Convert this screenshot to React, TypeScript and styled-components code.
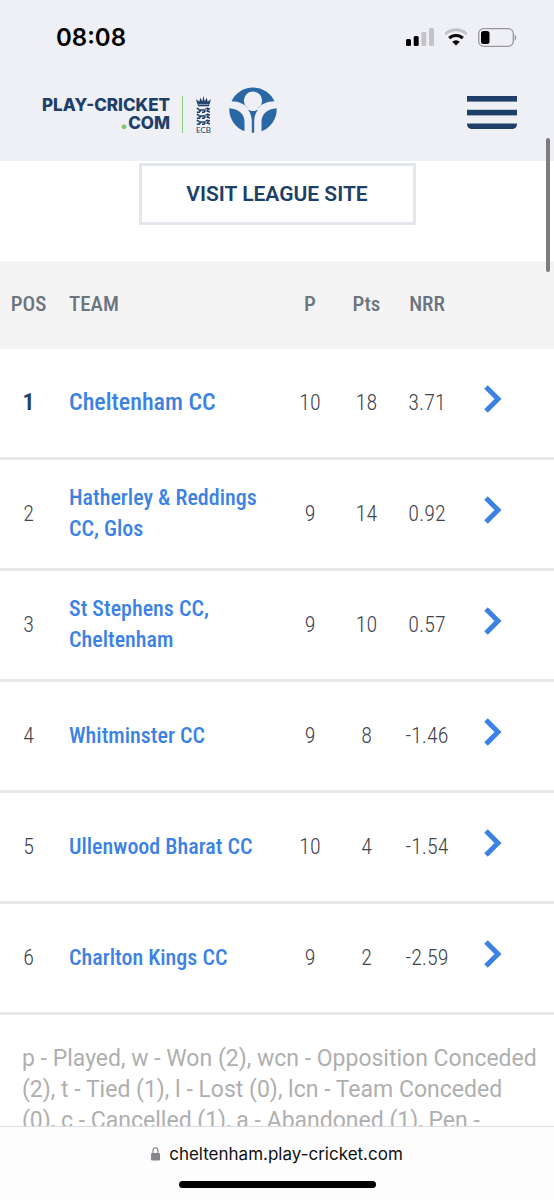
import React from "react";
import styled, { createGlobalStyle } from "styled-components";

const colors = {
  navy: "#1d3f68",
  link: "#3c82e4",
  bar: "#eff0f6",
  line: "#e8e8ea",
};

const condensed = `"Roboto Condensed", "Liberation Sans Narrow", Roboto, sans-serif`;

const GlobalStyle = createGlobalStyle`
  *, *::before, *::after { box-sizing: border-box; }
  body { margin: 0; background: #fff; font-family: Roboto, sans-serif; }
`;

const Screen = styled.div`
  position: relative;
  display: flex;
  flex-direction: column;
  height: 100vh;
  overflow: hidden;
`;

const TopBar = styled.header`
  flex: none;
  background: ${colors.bar};
  padding-bottom: 11px;
`;

const StatusBar = styled.div`
  display: flex;
  align-items: center;
  justify-content: space-between;
  height: 74px;
  padding: 0 37px 0 56px;
`;

const Clock = styled.time`
  padding-top: 2px;
  font: 600 24px/32px Inter, sans-serif;
  color: #000;
`;

const StatusIcons = styled.div`
  display: flex;
  align-items: center;
  gap: 10px;
`;

const Masthead = styled.div`
  display: flex;
  align-items: center;
  justify-content: space-between;
  height: 76px;
  padding: 0 37px 0 42px;
`;

const Brand = styled.a`
  display: flex;
  align-items: flex-end;
  padding-bottom: 6px;
  color: ${colors.navy};
  text-decoration: none;
`;

const Wordmark = styled.span`
  display: flex;
  flex-direction: column;
  align-items: flex-end;
  padding-bottom: 1px;
  font: 800 17px/18px Inter, sans-serif;
`;

const Dot = styled.span`
  color: #7cc468;
  font-size: 25px;
  line-height: 0;
`;

const Divider = styled.span`
  width: 1px;
  height: 37px;
  margin: 0 13px 0 12px;
  background: #8cc97a;
`;

const Crest = styled.svg`
  display: block;
  margin-right: 18px;
`;

const MenuButton = styled.button`
  display: block;
  padding: 0;
  border: 0;
  background: none;
  line-height: 0;
`;

const Content = styled.main`
  flex: 1;
  min-height: 0;
  overflow: hidden;
`;

const LinkRow = styled.div`
  display: flex;
  justify-content: center;
  padding: 2px 0 36px;
`;

const SiteLink = styled.a`
  width: 50%;
  padding: 15px 0;
  border: 3px solid #e4e6ee;
  color: ${colors.navy};
  font: 600 21px/26px Roboto, sans-serif;
  text-align: center;
  text-decoration: none;
`;

const Table = styled.table`
  width: 100%;
  table-layout: fixed;
  border-collapse: separate;
  border-spacing: 0;
  font-family: ${condensed};
  font-size: 22px;
  line-height: 31px;
`;

const Col = styled.col<{ $w?: number }>`
  width: ${(p) => (p.$w ? `${p.$w}px` : "auto")};
`;

const HeadCell = styled.th<{ $left?: boolean }>`
  height: 88px;
  padding: ${(p) => (p.$left ? "0 0 2px 12px" : "0 0 2px")};
  background: #f4f4f4;
  color: #6c757f;
  font-size: 21px;
  font-weight: 500;
  text-align: ${(p) => (p.$left ? "left" : "center")};
`;

const Cell = styled.td<{ $lead?: boolean }>`
  height: 111px;
  padding: 0 0 2px;
  border-bottom: 3px solid ${colors.line};
  color: ${(p) => (p.$lead ? colors.navy : "#3f444d")};
  font-size: ${(p) => (p.$lead ? 24 : 22)}px;
  font-weight: ${(p) => (p.$lead ? 600 : 300)};
  text-align: center;
`;

const TeamCell = styled(Cell)`
  padding: 0 20px 2px 12px;
  text-align: left;
`;

const ArrowCell = styled(Cell)`
  padding: 0 27px 12px 0;
`;

const TeamLink = styled.a<{ $lead?: boolean }>`
  color: ${colors.link};
  font-size: ${(p) => (p.$lead ? 24 : 22)}px;
  font-weight: 500;
  text-decoration: none;
`;

const RowLink = styled.a`
  display: inline-block;
  vertical-align: middle;
  line-height: 0;
`;

const Legend = styled.p`
  margin: 0;
  padding: 28px 14px 27px 22px;
  color: #afafaf;
  font: 400 23px/31px Roboto, sans-serif;
`;

const ScrollThumb = styled.div`
  position: absolute;
  top: 138px;
  right: 4px;
  width: 4px;
  height: 134px;
  border-radius: 2px;
  background: #7d7d7f;
`;

const AddressBar = styled.footer`
  flex: none;
  display: flex;
  flex-direction: column;
  align-items: center;
  justify-content: space-between;
  height: 74px;
  padding: 15px 0 12px;
  border-top: 1px solid #dcdcde;
  background: #fdfdfd;
`;

const Address = styled.div`
  display: flex;
  align-items: center;
  gap: 9px;
  color: #111;
  font: 400 17px/24px Inter, sans-serif;
`;

const HomeIndicator = styled.div`
  width: 197px;
  height: 7px;
  border-radius: 4px;
  background: #000;
`;

interface Team {
  name: string;
  played: number;
  points: number;
  nrr: string;
}

const teams: Team[] = [
  { name: "Cheltenham CC", played: 10, points: 18, nrr: "3.71" },
  { name: "Hatherley & Reddings CC, Glos", played: 9, points: 14, nrr: "0.92" },
  { name: "St Stephens CC, Cheltenham", played: 9, points: 10, nrr: "0.57" },
  { name: "Whitminster CC", played: 9, points: 8, nrr: "-1.46" },
  { name: "Ullenwood Bharat CC", played: 10, points: 4, nrr: "-1.54" },
  { name: "Charlton Kings CC", played: 9, points: 2, nrr: "-2.59" },
];

const Signal = () => (
  <svg width="28" height="18" viewBox="0 0 28 18" aria-hidden="true">
    <rect x="0" y="11" width="5" height="7" rx="1.5" />
    <rect x="7.7" y="8" width="5" height="10" rx="1.5" />
    <rect x="15.3" y="4" width="5" height="14" rx="1.5" fill="#c3c4c9" />
    <rect x="23" y="0" width="5" height="18" rx="1.5" fill="#c3c4c9" />
  </svg>
);

const Wifi = () => (
  <svg width="24" height="18" viewBox="0 0 24 18" aria-hidden="true">
    <path d="M1.4 6.1a15.4 15.4 0 0 1 21.2 0" fill="none" stroke="#c3c4c9" strokeWidth="3" />
    <path d="M5.2 10.2a9.8 9.8 0 0 1 13.6 0" fill="none" stroke="#000" strokeWidth="3" />
    <path d="M12 17.6 8.2 13.8a5.5 5.5 0 0 1 7.6 0z" />
  </svg>
);

const Battery = () => (
  <svg width="39" height="19" viewBox="0 0 39 19" aria-hidden="true">
    <rect x=".7" y=".7" width="34.6" height="17.6" rx="5" fill="none" stroke="#98989c" strokeWidth="1.3" />
    <rect x="3" y="3" width="8.5" height="13" rx="2.5" />
    <path d="M36.7 6.5c2 .8 2 5.2 0 6z" fill="#98989c" />
  </svg>
);

const Lion = ({ y }: { y: number }) => (
  <g transform={`translate(0 ${y})`}>
    <path d="M.8.8 3 1.8M2.500 2.400h7M9.500 1.400 11.500.8 14 1.600M.8 4.800h2.400l1.500-1.800M6 4.800h2l1.500-2M10.500 3.200 14 4.600M12 1v3" />
  </g>
);

const EcbCrest = () => (
  <Crest width="15" height="37" viewBox="0 0 15 37" role="img" aria-label="ECB">
    <path
      d="M2.200 10.200 0 3.200l3.400 2.600L4.200 1.800l2.100 3.600L7.500 0l1.200 5.400 2.100-3.600.8 4L15 3.200l-2.200 7z"
      fill={colors.navy}
    />
    <path d="M2.500 8.400h10" stroke={colors.bar} strokeWidth=".6" />
    <g fill="none" stroke={colors.navy} strokeWidth="1.500">
      <Lion y={11.5} />
      <Lion y={17.5} />
      <Lion y={23.5} />
    </g>
    <text x="7.5" y="36.5" textAnchor="middle" fontFamily="Lato, sans-serif" fontSize="8" fill={colors.navy}>
      ECB
    </text>
  </Crest>
);

const FigureLogo = () => (
  <svg width="48" height="47" viewBox="0 0 48 47" aria-hidden="true">
    <g fill="#2a67a5">
      <path d="M2.500 15.200A23.700 23.700 0 0 1 45.500 15.200C38 15.200 31.500 18.500 28.300 22.500A9 9 0 1 0 19.700 22.500C16.500 18.500 10 15.200 2.500 15.200Z" />
      <path d="M.3 22.300C9.500 22.800 15.500 28 15.500 36V45.200A23.500 23.500 0 0 1 .3 22.300Z" />
      <path d="M47.700 22.300C38.500 22.800 32.500 28 32.500 36V45.200A23.500 23.500 0 0 0 47.700 22.300Z" />
      <path d="M19 23.500Q24 26.500 29 23.500C25.800 28 25.200 32 25.200 36V46.800H22.800V36C22.800 32 22.200 28 19 23.500Z" />
    </g>
    <circle cx="24" cy="14.5" r="8.600" fill={colors.bar} />
  </svg>
);

const MenuIcon = () => (
  <svg width="50" height="33" viewBox="0 0 50 33" fill={colors.navy} aria-hidden="true">
    <rect width="50" height="5.600" />
    <rect y="13.800" width="50" height="5.600" />
    <path d="M0 27.600H50C50 31 48.500 33 45.500 33H4.500C1.500 33 0 31 0 27.600Z" />
  </svg>
);

const Chevron = () => (
  <svg width="18" height="28" viewBox="0 0 18 28" aria-hidden="true">
    <path d="M2 2 14 14 2 26" fill="none" stroke={colors.link} strokeWidth="5" />
  </svg>
);

const Padlock = () => (
  <svg width="9" height="14" viewBox="0 0 9 14" aria-hidden="true">
    <rect y="6" width="9" height="7.500" rx="1.200" fill="#85858a" />
    <path d="M2 6.500V3.600a2.500 2.800 0 0 1 5 0V6.500" fill="none" stroke="#85858a" strokeWidth="1.200" />
  </svg>
);

export default function App() {
  return (
    <Screen>
      <GlobalStyle />
      <TopBar>
        <StatusBar>
          <Clock>08:08</Clock>
          <StatusIcons>
            <Signal />
            <Wifi />
            <Battery />
          </StatusIcons>
        </StatusBar>
        <Masthead>
          <Brand href="#home">
            <Wordmark>
              <span>PLAY-CRICKET</span>
              <span>
                <Dot>.</Dot>COM
              </span>
            </Wordmark>
            <Divider />
            <EcbCrest />
            <FigureLogo />
          </Brand>
          <MenuButton type="button" aria-label="Menu">
            <MenuIcon />
          </MenuButton>
        </Masthead>
      </TopBar>

      <Content>
        <LinkRow>
          <SiteLink href="#league">VISIT LEAGUE SITE</SiteLink>
        </LinkRow>
        <Table>
          <colgroup>
            <Col $w={57} />
            <Col />
            <Col $w={56} />
            <Col $w={57} />
            <Col $w={64} />
            <Col $w={95} />
          </colgroup>
          <thead>
            <tr>
              <HeadCell scope="col">POS</HeadCell>
              <HeadCell scope="col" $left>
                TEAM
              </HeadCell>
              <HeadCell scope="col">P</HeadCell>
              <HeadCell scope="col">Pts</HeadCell>
              <HeadCell scope="col">NRR</HeadCell>
              <HeadCell as="td" />
            </tr>
          </thead>
          <tbody>
            {teams.map((team, i) => (
              <tr key={team.name}>
                <Cell $lead={i === 0}>{i + 1}</Cell>
                <TeamCell>
                  <TeamLink href="#team" $lead={i === 0}>
                    {team.name}
                  </TeamLink>
                </TeamCell>
                <Cell>{team.played}</Cell>
                <Cell>{team.points}</Cell>
                <Cell>{team.nrr}</Cell>
                <ArrowCell>
                  <RowLink href="#team" aria-label={`View ${team.name}`}>
                    <Chevron />
                  </RowLink>
                </ArrowCell>
              </tr>
            ))}
          </tbody>
        </Table>
        <Legend>
          p - Played, w - Won (2), wcn - Opposition Conceded (2), t - Tied (1), l - Lost (0), lcn -
          Team Conceded (0), c - Cancelled (1), a - Abandoned (1), Pen -
        </Legend>
      </Content>

      <ScrollThumb />

      <AddressBar>
        <Address>
          <Padlock />
          cheltenham.play-cricket.com
        </Address>
        <HomeIndicator />
      </AddressBar>
    </Screen>
  );
}
